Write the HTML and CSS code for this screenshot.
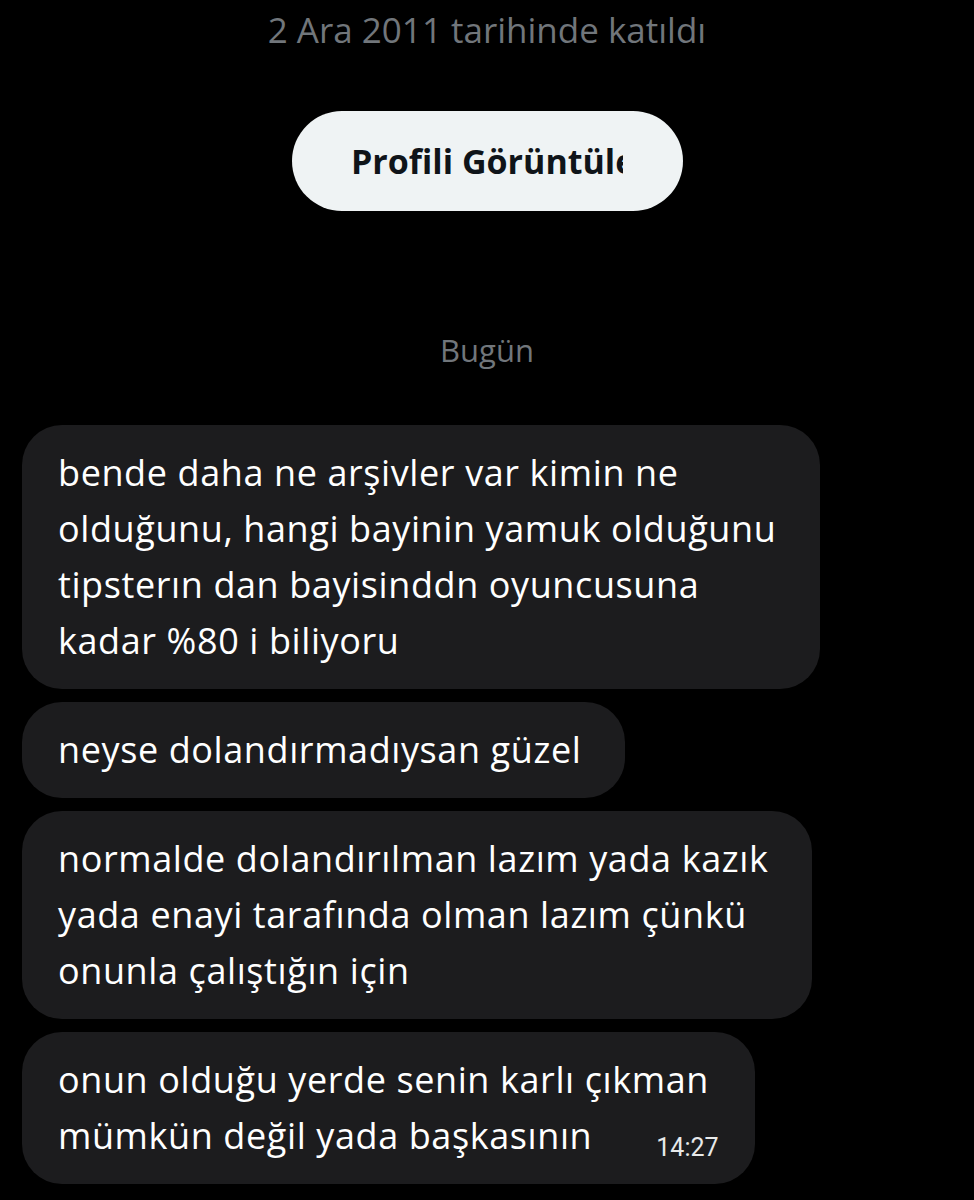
FILE: index.html
```html
<!DOCTYPE html>
<html lang="tr">

<head>
    <meta charset="UTF-8">
    <meta name="viewport" content="width=device-width, initial-scale=1.0">
    <title>Mesajlar</title>
    <link rel="stylesheet" href="styles.css">
</head>

<body>
    <div class="page">
        <div class="joined">2 Ara 2011 tarihinde katıldı</div>

        <div class="btn-row">
            <button class="profile-btn"><span>Profili Görüntüle</span></button>
        </div>

        <div class="day">Bugün</div>

        <div class="thread">
            <div class="bubble">
                bende daha ne arşivler var kimin ne<br>
                olduğunu, hangi bayinin yamuk olduğunu<br>
                tipsterın dan bayisinddn oyuncusuna<br>
                kadar %80 i biliyoru
            </div>
            <div class="bubble">
                neyse dolandırmadıysan güzel
            </div>
            <div class="bubble">
                normalde dolandırılman lazım yada kazık<br>
                yada enayi tarafında olman lazım çünkü<br>
                onunla çalıştığın için
            </div>
            <div class="bubble">
                onun olduğu yerde senin karlı çıkman
                <div class="last-line">
                    <span>mümkün değil yada başkasının</span>
                    <span class="time">14:27</span>
                </div>
            </div>
        </div>
    </div>
</body>

</html>
```

FILE: styles.css
```css
body {
    margin: 0;
    background: #000;
    font-family: "Open Sans", "Noto Sans", "Liberation Sans", sans-serif;
    color: #e7e9ea;
}

.page {
    width: 974px;
    height: 1200px;
    overflow: hidden;
}

.joined {
    text-align: center;
    font-size: 35px;
    line-height: 60px;
    color: #71767b;
}

.btn-row {
    display: flex;
    justify-content: center;
    margin-top: 51px;
}

.profile-btn {
    width: 391px;
    height: 100px;
    border: none;
    border-radius: 50px;
    background: #eff3f4;
    color: #0f1419;
    font-family: inherit;
    font-size: 34px;
    font-weight: 700;
    display: flex;
    align-items: center;
    justify-content: center;
    padding: 0;
}

/* the label is cut off on the right in the app */
.profile-btn span {
    display: block;
    width: 272px;
    overflow: hidden;
    white-space: nowrap;
}

.day {
    text-align: center;
    font-size: 31px;
    line-height: 40px;
    color: #71767b;
    margin-top: 119px;
}

.thread {
    display: flex;
    flex-direction: column;
    align-items: flex-start;
    gap: 13px;
    margin-top: 55px;
    padding-left: 22px;
}

.bubble {
    background: #1c1c1e;
    border-radius: 40px;
    padding: 20px 44px 20px 36px;
    font-size: 36px;
    letter-spacing: 0.6px;
    line-height: 56px;
    color: #fff;
    white-space: nowrap;
}

.last-line {
    display: flex;
    align-items: flex-end;
}

.time {
    font-family: Roboto, "Liberation Sans", sans-serif;
    font-size: 25px;
    letter-spacing: 0;
    line-height: 40px;
    margin-left: 64px;
    margin-right: -8px;
    margin-bottom: -4px;
    color: #e7e9ea;
}
```
